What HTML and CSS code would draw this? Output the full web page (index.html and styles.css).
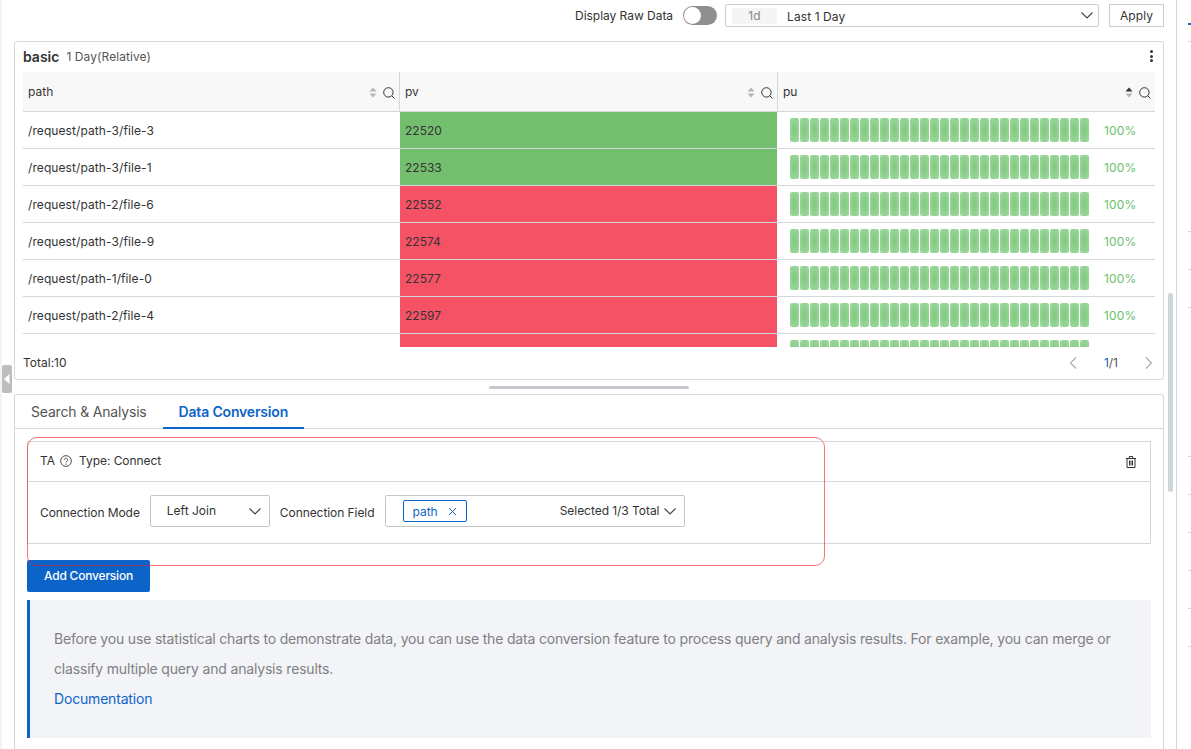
FILE: index.html
```html
<!DOCTYPE html>
<html lang="en">
<head>
<meta charset="utf-8">
<title>Dashboard</title>
<link rel="stylesheet" href="styles.css">
</head>
<body>
<div class="app">
  <main class="main">
    <div class="toolbar">
      <span class="raw-label">Display Raw Data</span>
      <span class="switch"><span class="knob"></span></span>
      <div class="range"><span class="range-tag">1d</span><span class="range-text">Last 1 Day</span>
        <svg class="chev" width="12" height="7" viewBox="0 0 12 7"><path d="M.5.5L6 6l5.500-5.500" fill="none" stroke="#444" stroke-width="1.1"/></svg>
      </div>
      <button class="apply">Apply</button>
    </div>

    <section class="card">
      <header class="card-head">
        <b class="card-title">basic</b><span class="card-sub">1 Day(Relative)</span>
        <span class="kebab"><i></i><i></i><i></i></span>
      </header>
      <div class="table-wrap">
        <div class="row head">
          <div class="cell">path<span class="tools"><svg class="sort" width="8" height="11" viewBox="0 0 8 11"><path d="M4 .5L7.500 4.500h-7z" fill="#b5b5b5"/><path d="M4 10.500L7.500 6.500h-7z" fill="#b5b5b5"/></svg><svg class="mag" width="12" height="12" viewBox="0 0 12 12"><circle cx="5.400" cy="5.400" r="4.700" fill="none" stroke="#333"/><path d="M8.800 8.800l2.700 2.700" stroke="#333"/></svg></span></div>
          <div class="cell">pv<span class="tools"><svg class="sort" width="8" height="11" viewBox="0 0 8 11"><path d="M4 .5L7.500 4.500h-7z" fill="#b5b5b5"/><path d="M4 10.500L7.500 6.500h-7z" fill="#b5b5b5"/></svg><svg class="mag" width="12" height="12" viewBox="0 0 12 12"><circle cx="5.400" cy="5.400" r="4.700" fill="none" stroke="#333"/><path d="M8.800 8.800l2.700 2.700" stroke="#333"/></svg></span></div>
          <div class="cell">pu<span class="tools"><svg class="sort" width="8" height="11" viewBox="0 0 8 11"><path d="M4 .5L7.500 4.500h-7z" fill="#333"/><path d="M4 10.500L7.500 6.500h-7z" fill="#b5b5b5"/></svg><svg class="mag" width="12" height="12" viewBox="0 0 12 12"><circle cx="5.400" cy="5.400" r="4.700" fill="none" stroke="#333"/><path d="M8.800 8.800l2.700 2.700" stroke="#333"/></svg></span></div>
        </div>
        <div id="rows"></div>
      </div>
      <footer class="card-foot">
        <span>Total:10</span>
        <span class="pager">
          <svg width="8" height="12" viewBox="0 0 8 12"><path d="M7 .5L1.500 6 7 11.500" fill="none" stroke="#a8a8a8" stroke-width="1.100"/></svg>
          <span class="pages"><em>1</em>/1</span>
          <svg width="8" height="12" viewBox="0 0 8 12"><path d="M1 .5L6.500 6 1 11.500" fill="none" stroke="#a8a8a8" stroke-width="1.100"/></svg>
        </span>
      </footer>
    </section>

    <div class="handle-row"><span class="handle"></span></div>

    <section class="panel">
      <nav class="tabs">
        <span class="tab">Search &amp; Analysis</span>
        <span class="tab active">Data Conversion</span>
      </nav>
      <div class="panel-body">
        <div class="conv">
          <div class="conv-head">
            <span>TA</span>
            <svg class="help" width="12" height="12" viewBox="0 0 13 13"><circle cx="6.500" cy="6.500" r="5.800" fill="none" stroke="#444"/><path d="M4.700 5.200a1.800 1.800 0 1 1 2.700 1.600c-.6.3-.9.6-.9 1.300" fill="none" stroke="#444"/><circle cx="6.500" cy="9.800" r=".7" fill="#444"/></svg>
            <span class="conv-type">Type: Connect</span>
            <svg class="trash" width="10" height="12" viewBox="0 0 10 12"><path d="M0 2.500h10M3.300 2.500V.5h3.400v2M1 2.500v9h8v-9M3.500 4.500v5M5 4.500v5M6.500 4.500v5" fill="none" stroke="#333"/></svg>
          </div>
          <div class="conv-body">
            <label class="field-label">Connection Mode</label>
            <div class="select mode"><span>Left Join</span>
              <svg width="12" height="7" viewBox="0 0 12 7"><path d="M.5.5L6 6l5.500-5.500" fill="none" stroke="#444" stroke-width="1.100"/></svg>
            </div>
            <label class="field-label">Connection Field</label>
            <div class="select fieldsel">
              <span class="chip">path<svg width="9" height="9" viewBox="0 0 9 9"><path d="M1 1l7 7M8 1L1 8" stroke="#0d64c8"/></svg></span>
              <span class="count">Selected 1/3 Total</span>
              <svg width="12" height="7" viewBox="0 0 12 7"><path d="M.5.5L6 6l5.500-5.500" fill="none" stroke="#444" stroke-width="1.100"/></svg>
            </div>
          </div>
        </div>
        <button class="add">Add Conversion</button>
        <div class="info">
          <p>Before you use statistical charts to demonstrate data, you can use the data conversion feature to process query and analysis results. For example, you can merge or classify multiple query and analysis results.</p>
          <a class="doc">Documentation</a>
        </div>
      </div>
    </section>
  </main>
  <div class="scroll-track"><span class="scroll-thumb"></span></div>
  <aside class="strip">
    <span class="strip-tab"></span>
    <div class="ticks first"><i></i></div>
    <div class="ticks second"><i></i><i></i><i></i></div>
    <div class="ticks third"><i></i><i></i><i></i><i></i><i></i><i></i></div>
  </aside>
</div>
<div class="collapse"><svg width="6" height="10" viewBox="0 0 6 10"><path d="M5.500 0v10L0 5z" fill="#fff"/></svg></div>
<div class="callout"></div>
<script>
var data=[["/request/path-3/file-3","22520","g"],["/request/path-3/file-1","22533","g"],["/request/path-2/file-6","22552","r"],["/request/path-3/file-9","22574","r"],["/request/path-1/file-0","22577","r"],["/request/path-2/file-4","22597","r"],["","","r"]];
var h="";
data.forEach(function(d){
  var segs="";for(var i=0;i<30;i++)segs+="<i></i>";
  var pct=d[0]?"100%":"";
  h+='<div class="row"><div class="cell pathcell">'+d[0]+'</div><div class="cell '+d[2]+'">'+d[1]+'</div><div class="cell bar"><span class="segs">'+segs+'</span><span class="pct">'+pct+'</span></div></div>';
});
document.getElementById("rows").innerHTML=h;
</script>
</body>
</html>
```
FILE: styles.css
```css
* { box-sizing: border-box; }
html, body { margin: 0; height: 100%; overflow: hidden; }
body { width: 1191px; height: 749px; background: #fff; font-family: Inter, "Liberation Sans", sans-serif; font-size: 12px; color: #333; position: relative; }
.app { display: flex; height: 749px; }
.main { width: 1165px; padding-left: 14px; display: flex; flex-direction: column; box-shadow: inset 2px 0 0 #f2f3f5; }

.toolbar { height: 41px; padding: 4px 0 0 0; display: flex; align-items: flex-start; }
.raw-label { margin-left: 561px; line-height: 24px; width: 108px; white-space: nowrap; letter-spacing: -.03px; }
.switch { width: 34px; height: 19px; margin-top: 2px; border-radius: 10px; background: #8f8f8f; position: relative; }
.knob { position: absolute; left: 1px; top: 1px; width: 17px; height: 17px; border-radius: 50%; background: #fff; }
.range { margin-left: 8px; width: 374px; height: 23px; border: 1px solid #c9ced3; border-radius: 2px; display: flex; align-items: center; padding: 0 0 0 6px; }
.range-tag { width: 45px; height: 16px; background: #f5f5f5; color: #888; text-align: center; line-height: 16px; border-radius: 2px; letter-spacing: .2px; }
.range-text { margin-left: 10px; flex: 1; padding-top: 1px; letter-spacing: .1px; }
.chev { margin-right: 5px; }
.apply { margin-left: 10px; width: 55px; height: 23px; border: 1px solid #c9ced3; background: #fff; font: inherit; color: #333; padding: 0; border-radius: 0; letter-spacing: .1px; }

.card { width: 1150px; height: 339px; border: 1px solid #d3d8dc; border-radius: 3px; padding: 0 8px; display: flex; flex-direction: column; }
.card-head { height: 30px; display: flex; align-items: center; padding-bottom: 2px; }
.card-title { font-size: 14px; font-weight: 600; color: #333; }
.card-sub { margin-left: 7px; color: #555; letter-spacing: .08px; }
.kebab { margin-left: auto; margin-right: 2px; width: 3px; display: flex; flex-direction: column; gap: 1.5px; }
.kebab i { width: 3px; height: 3px; border-radius: 50%; background: #333; }
.table-wrap { height: 275px; overflow: hidden; }
.row { display: grid; grid-template-columns: 376px 378px 378px; height: 37px; border-bottom: 1px solid #d3d8dc; }
.row.head { height: 40px; background: #f8f8f8; }
.cell { padding-left: 5px; display: flex; align-items: center; min-width: 0; }
.pathcell { letter-spacing: .09px; }
.head .cell { position: relative; padding-bottom: 1px; }
.head .cell + .cell { border-left: 1px solid #d3d8dc; }
.tools { margin-left: auto; margin-right: 4px; display: flex; align-items: center; gap: 6px; padding-top: 3px; }
.cell.g, .cell.r { margin-left: 1px; padding-left: 5px; }
.cell.g { background: #74bf6f; }
.cell.r { background: #f65266; }
.cell.bar { padding-left: 13px; }
.segs { display: flex; gap: 1px; }
.segs i { width: 9px; height: 24px; border-radius: 2px; background: radial-gradient(ellipse at center, #7dc97d 0, #a2daa2 100%); }
.pct { margin-left: 15px; color: #6cc06c; letter-spacing: .2px; }

.card-foot { height: 32px; display: flex; align-items: center; justify-content: space-between; padding-bottom: 1px; }
.pager { display: flex; align-items: center; margin-right: 2px; }
.pages { margin: 0 27px; color: #555; }
.pages em { font-style: normal; color: #0d64c8; }

.handle-row { height: 14px; display: flex; justify-content: center; padding-top: 6px; width: 1150px; }
.handle { width: 200px; height: 3px; background: #c4c8cc; border-radius: 2px; }

.panel { width: 1150px; flex: 1; border: 1px solid #d3d8dc; border-bottom: 0; border-radius: 3px 3px 0 0; display: flex; flex-direction: column; }
.tabs { height: 34px; border-bottom: 1px solid #d3d8dc; display: flex; padding-left: 16px; }
.tab { font-size: 14px; line-height: 34px; color: #555; margin-right: 32px; letter-spacing: -.18px; }
.tab.active { padding: 0 16px; margin-left: -16px; height: 34px; color: #0d64c8; font-weight: 600; border-bottom: 2px solid #0d64c8; }
.panel-body { padding: 12px 12px 0 12px; }
.conv { height: 103px; border: 1px solid #d3d8dc; }
.conv-head { height: 40px; border-bottom: 1px solid #d3d8dc; display: flex; align-items: center; padding: 0 12px 3px; }
.help { margin-left: 5px; margin-top: 2px; }
.conv-type { margin-left: 7px; letter-spacing: -.05px; }
.trash { margin-left: auto; margin-right: 2px; margin-top: 3px; }
.conv-body { display: flex; align-items: flex-start; padding: 13px 12px 0; }
.field-label { line-height: 36px; white-space: nowrap; letter-spacing: -.07px; }
.select { height: 32px; border: 1px solid #c6c6c6; border-radius: 2px; display: flex; align-items: center; }
.mode { width: 120px; margin: 0 10px; padding: 0 8px 0 16px; justify-content: space-between; }
.mode span { padding-bottom: 2px; }
.fieldsel { width: 300px; margin-left: 11px; padding: 0 8px 0 17px; }
.chip { width: 64px; height: 22px; border: 1px solid #0d64c8; border-radius: 2px; color: #0d64c8; display: flex; align-items: center; padding-left: 8px; gap: 10px; }
.count { margin-left: auto; margin-right: 5px; padding-bottom: 2px; letter-spacing: -.05px; }
.add { display: block; margin-top: 16px; width: 123px; height: 32px; border: 0; border-radius: 2px; background: #0d64c8; color: #fff; font: inherit; font-weight: 500; letter-spacing: -.2px; padding: 0 0 2px; }
.info { margin-top: 8px; height: 138px; background: #f3f4f8; border-left: 3px solid #0d64c8; padding: 24px 24px 0; font-size: 14px; color: #808080; line-height: 30px; letter-spacing: -.18px; }
.info p { margin: 0; }
.doc { color: #0d64c8; }

.scroll-track { width: 12px; border-right: 1px solid #d3d8dc; position: relative; }
.scroll-thumb { position: absolute; left: 3px; top: 293px; width: 5px; height: 199px; background: #d0d5d9; border-radius: 3px; }
.strip { flex: 1; padding-left: 11px; }
.strip-tab { display: block; margin-top: 23px; height: 2px; background: #0d64c8; }
.ticks { display: flex; flex-direction: column; gap: 37px; }
.ticks.first { margin-top: 16px; }
.ticks.second { margin-top: 189px; }
.ticks.third { margin-top: 148px; }
.ticks i { height: 1px; background: #d3d8dc; display: block; }

.collapse { position: absolute; left: 2px; top: 365px; width: 10px; height: 28px; background: #bdbdbd; border-radius: 2px; display: flex; align-items: center; justify-content: center; }
.callout { position: absolute; left: 27px; top: 437px; width: 798px; height: 129px; border: 1px solid rgba(240, 30, 40, .62); border-radius: 10px; pointer-events: none; }
```
